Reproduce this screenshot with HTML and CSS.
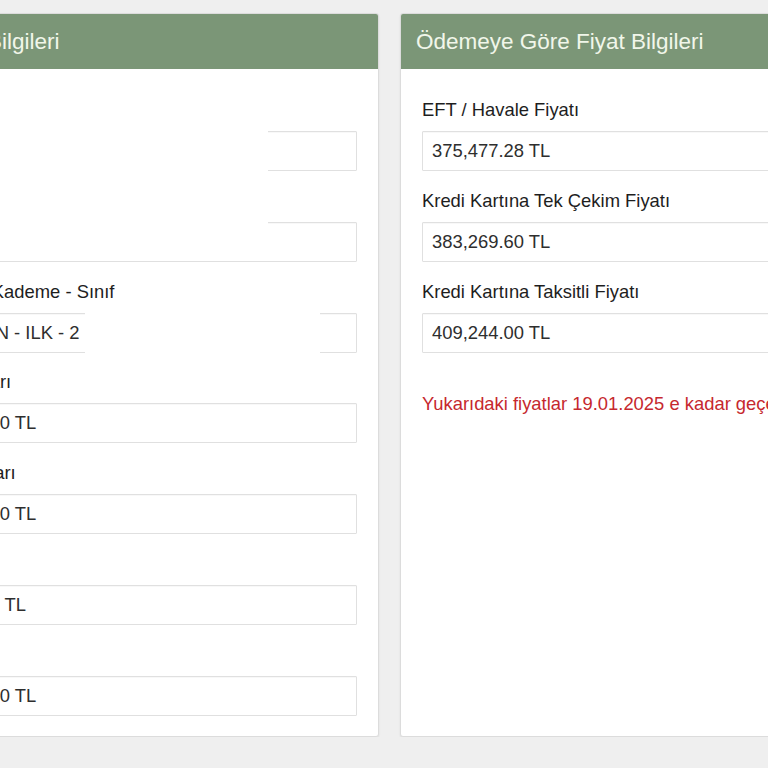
FILE: index.html
```html
<!DOCTYPE html>
<html lang="tr">
<head>
  <meta charset="UTF-8">
  <title>Fiyat Bilgileri</title>
  <meta name="viewport" content="width=device-width, initial-scale=1.0">
  <link rel="stylesheet" href="styles.css">
</head>
<body>
<div class="fiyat-wrapper">

  <!-- Öğrenci Bilgileri -->
  <section class="panel">
    <div class="panel-baslik">Öğrenci Bilgileri</div>
    <div class="panel-govde">
      <div class="grup">
        <label>Öğrenci Adı Soyadı</label>
        <input type="text" class="alan" value="" readonly>
      </div>
      <div class="grup">
        <label>T.C. Kimlik No</label>
        <input type="text" class="alan" value="" readonly>
      </div>
      <div class="grup">
        <label>Kampüs - Kademe - Sınıf</label>
        <input type="text" class="alan" value="KARAMAN - ILK - 2" readonly>
      </div>
      <div class="grup">
        <label>Servis Tutarı</label>
        <input type="text" class="alan" value="125,000.00 TL" readonly>
      </div>
      <div class="grup">
        <label>Yemek Tutarı</label>
        <input type="text" class="alan" value="140,000.00 TL" readonly>
      </div>
      <div class="grup">
        <label>İndirim</label>
        <input type="text" class="alan" value="10,000.00 TL" readonly>
      </div>
      <div class="grup">
        <label>Net Tutar</label>
        <input type="text" class="alan" value="135,000.00 TL" readonly>
      </div>
    </div>
    <!-- kişisel bilgiler gizlendi -->
    <div class="gizle gizle-ust"></div>
    <div class="gizle gizle-kampus"></div>
  </section>

  <!-- Ödemeye Göre Fiyat Bilgileri -->
  <section class="panel">
    <div class="panel-baslik">Ödemeye Göre Fiyat Bilgileri</div>
    <div class="panel-govde">
      <div class="grup">
        <label>EFT / Havale Fiyatı</label>
        <input type="text" class="alan" value="375,477.28 TL" readonly>
      </div>
      <div class="grup">
        <label>Kredi Kartına Tek Çekim Fiyatı</label>
        <input type="text" class="alan" value="383,269.60 TL" readonly>
      </div>
      <div class="grup">
        <label>Kredi Kartına Taksitli Fiyatı</label>
        <input type="text" class="alan" value="409,244.00 TL" readonly>
      </div>
      <p class="uyari">Yukarıdaki fiyatlar 19.01.2025 e kadar geçerlidir.</p>
    </div>
  </section>

</div>
</body>
</html>
```

FILE: styles.css
```css
html, body {
  margin: 0;
  padding: 0;
  background: #efefef;
  overflow: hidden;
  font-family: "Liberation Sans", Arial, sans-serif;
  color: #222;
}

.fiyat-wrapper {
  display: flex;
  gap: 21px;
  padding-top: 13px;
  margin-left: -114px;
  align-items: stretch;
}

.panel {
  position: relative;
  flex: 0 0 493px;
  box-sizing: border-box;
  background: #fff;
  border: 1px solid #dcdcdc;
  border-radius: 3px;
  box-shadow: 0 1px 2px rgba(0,0,0,0.08);
}

.panel-baslik {
  height: 55px;
  line-height: 55px;
  padding: 0 15px;
  background: #7b9677;
  color: #f1f6ea;
  font-size: 22.5px;
  border-radius: 2px 2px 0 0;
  white-space: nowrap;
}

.panel-govde {
  padding: 30px 21px 1px;
}

.grup {
  margin-bottom: 18.8px;
}

.grup label {
  display: block;
  font-size: 18.4px;
  line-height: 22px;
  margin-bottom: 10px;
  white-space: nowrap;
  color: #1e1e1e;
}

.alan {
  display: block;
  width: 100%;
  height: 40px;
  box-sizing: border-box;
  padding: 0 9px;
  border: 1px solid #e0e0e0;
  border-radius: 1px;
  background: #fff;
  box-shadow: inset 0 1px 1px rgba(0,0,0,0.03);
  font-family: inherit;
  font-size: 18.4px;
  color: #2e2e2e;
  outline: none;
}

.uyari {
  margin: 40px 0 0;
  font-size: 18.4px;
  line-height: 22px;
  color: #c6282e;
  white-space: nowrap;
}

.gizle {
  position: absolute;
  background: #fff;
}

.gizle-ust {
  left: 0;
  top: 81px;
  width: 381px;
  height: 165px;
}

.gizle-kampus {
  left: 198px;
  top: 296px;
  width: 235px;
  height: 45px;
}
```
